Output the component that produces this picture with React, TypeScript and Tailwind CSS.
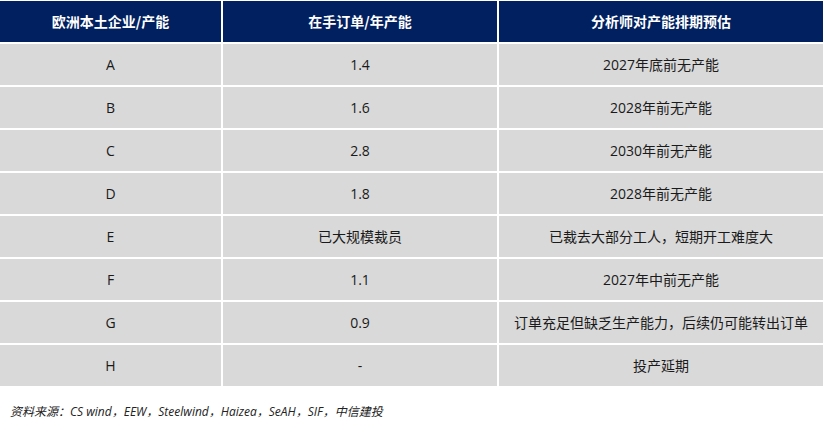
const rows: [string, string, string][] = [
  ['A', '1.4', '2027年底前无产能'],
  ['B', '1.6', '2028年前无产能'],
  ['C', '2.8', '2030年前无产能'],
  ['D', '1.8', '2028年前无产能'],
  ['E', '已大规模裁员', '已裁去大部分工人，短期开工难度大'],
  ['F', '1.1', '2027年中前无产能'],
  ['G', '0.9', '订单充足但缺乏生产能力，后续仍可能转出订单'],
  ['H', '-', '投产延期'],
]

const headers = ['欧洲本土企业/产能', '在手订单/年产能', '分析师对产能排期预估']

export default function App() {
  return (
    <div
      className="w-[827px] h-[426px] bg-white pt-px text-[#1a1a1a]"
      style={{ fontFamily: '"Open Sans", "Noto Sans CJK SC", sans-serif' }}
    >
      <div className="grid w-[823px] grid-cols-[221px_274px_324px] gap-[2px]">
        {headers.map((h) => (
          <div
            key={h}
            className="flex h-[41px] items-center justify-center bg-[#002060] text-[14px] font-bold text-white"
            style={{ fontFamily: '"Noto Sans CJK SC", sans-serif' }}
          >
            {h}
          </div>
        ))}
        {rows.map((r) =>
          r.map((cell, i) => (
            <div
              key={r[0] + i}
              className="flex h-[41px] items-center justify-center bg-[#d9d9d9] text-[14px]"
            >
              {cell}
            </div>
          )),
        )}
      </div>
      <p className="mt-[17px] pl-[10px] text-[12px] italic leading-[18px] text-[#222]">
        资料来源：CS wind，EEW，Steelwind，Haizea，SeAH，SIF，中信建投
      </p>
    </div>
  )
}
